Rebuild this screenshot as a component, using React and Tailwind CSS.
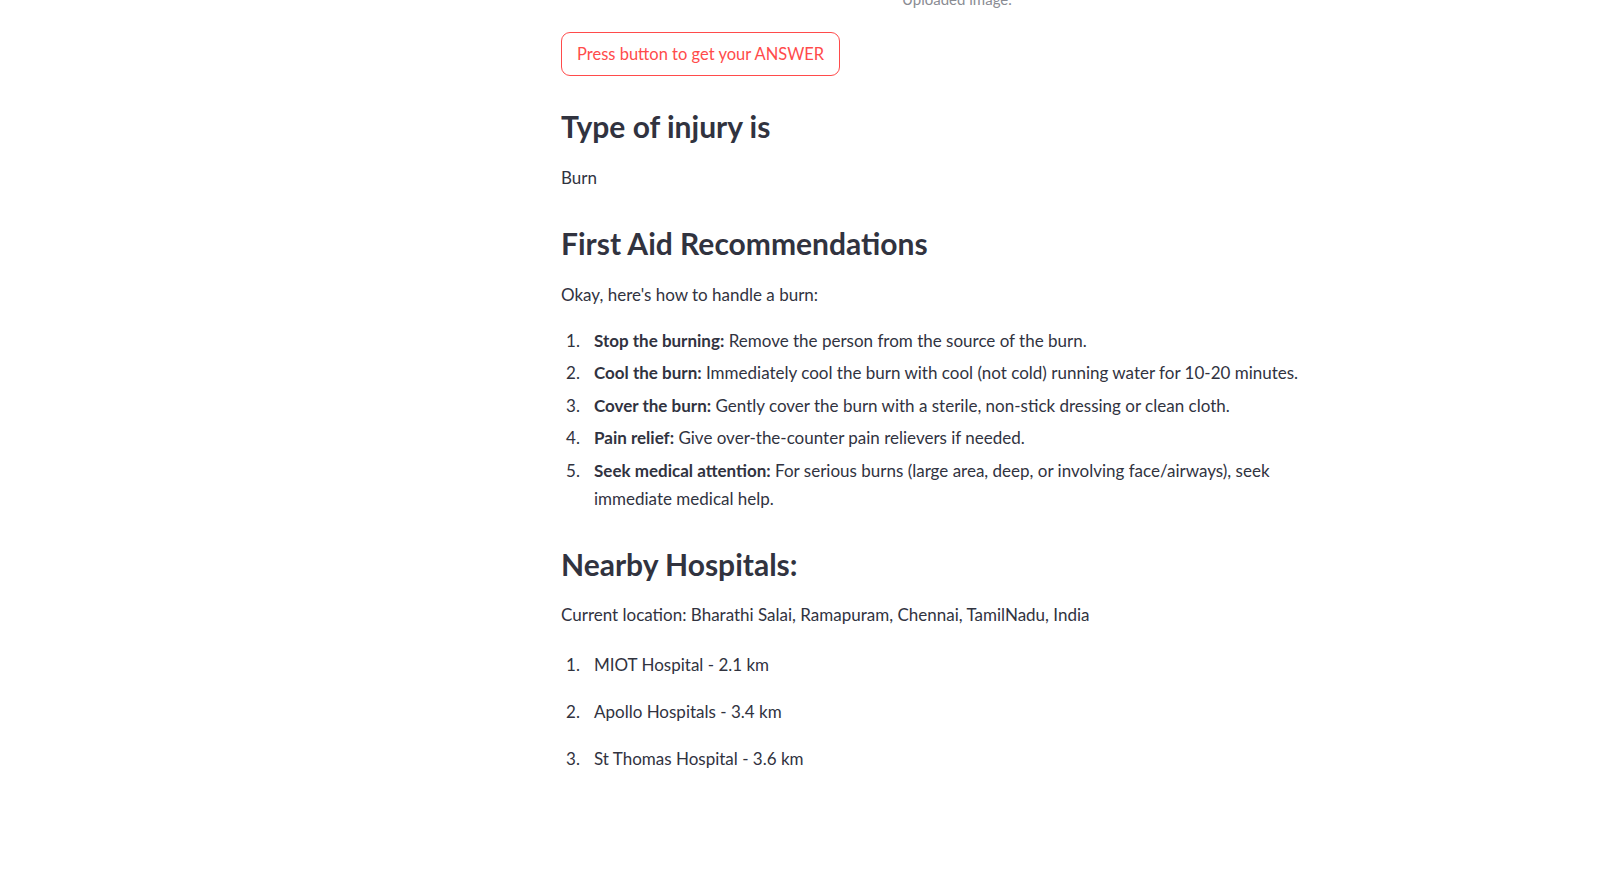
const steps = [
  { title: 'Stop the burning:', text: 'Remove the person from the source of the burn.' },
  { title: 'Cool the burn:', text: 'Immediately cool the burn with cool (not cold) running water for 10-20 minutes.' },
  { title: 'Cover the burn:', text: 'Gently cover the burn with a sterile, non-stick dressing or clean cloth.' },
  { title: 'Pain relief:', text: 'Give over-the-counter pain relievers if needed.' },
  { title: 'Seek medical attention:', text: 'For serious burns (large area, deep, or involving face/airways), seek immediate medical help.' },
];

const hospitals = ['MIOT Hospital - 2.1 km', 'Apollo Hospitals - 3.4 km', 'St Thomas Hospital - 3.6 km'];

const ListRow = ({ n, children }) => (
  <li className="flex">
    <span className="w-[33px] shrink-0 pl-[5px]">{n}.</span>
    <span className="w-[726px]">{children}</span>
  </li>
);

export default function App() {
  return (
    <div className="min-h-screen bg-white font-['Lato',sans-serif] text-[17px] leading-[28px] text-[#31333f] overflow-hidden">
      <div className="flex flex-col pl-[561px]">
        {/* image caption */}
        <div className="-mt-[13px] ml-[341px] text-[15px] leading-[24px] text-[#8a8c93]">Uploaded image.</div>

        <div className="mt-[21px]">
          <button className="h-[44px] px-[15px] rounded-[9px] border border-[#ff4b4b] bg-white text-[#ff4b4b] text-[16.5px] leading-[28px]">
            Press button to get your ANSWER
          </button>
        </div>

        <h3 className="mt-[32px] text-[30px] leading-[36px] font-bold">Type of injury is</h3>
        <p className="mt-[20px]">Burn</p>

        <h3 className="mt-[33px] text-[30px] leading-[36px] font-bold">First Aid Recommendations</h3>
        <p className="mt-[20px]">Okay, here's how to handle a burn:</p>
        <ol className="mt-[18px] flex flex-col gap-[4.4px]">
          {steps.map((s, i) => (
            <ListRow key={s.title} n={i + 1}>
              <strong className="font-bold">{s.title}</strong> {s.text}
            </ListRow>
          ))}
        </ol>

        <h3 className="mt-[33px] text-[30px] leading-[36px] font-bold">Nearby Hospitals:</h3>
        <p className="mt-[19px]">Current location: Bharathi Salai, Ramapuram, Chennai, TamilNadu, India</p>
        <ol className="mt-[22px] flex flex-col gap-[19px]">
          {hospitals.map((h, i) => (
            <ListRow key={h} n={i + 1}>{h}</ListRow>
          ))}
        </ol>
      </div>
    </div>
  );
}
